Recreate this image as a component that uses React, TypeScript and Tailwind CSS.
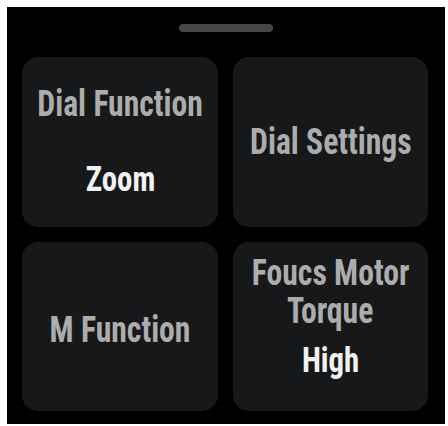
type Tile = {
  title: string[]
  value?: string
  className?: string
}

const TILES: Tile[] = [
  { title: ["Dial Function"], value: "Zoom" },
  { title: ["Dial Settings"] },
  { title: ["M Function"], className: "pt-[6px]" },
  { title: ["Foucs Motor", "Torque"], value: "High", className: "pb-[19px]" },
]

function SettingTile({ title, value, className }: Tile) {
  const single = title.length === 1
  return (
    <button
      type="button"
      className={`flex flex-col items-center justify-center rounded-[16px] bg-[#171819] ${className ?? ""}`}
    >
      {title.map((line) => (
        <span
          key={line}
          className="scale-x-[0.88] whitespace-nowrap text-[36px] leading-[38px] font-bold text-[#acacac] [font-stretch:75%]"
        >
          {line}
        </span>
      ))}
      {value ? (
        <span
          className={`scale-x-[0.88] whitespace-nowrap text-[35px] leading-[38px] font-bold text-[#f2f2f2] [font-stretch:75%] ${single ? "mt-[38px]" : "mt-[12px]"}`}
        >
          {value}
        </span>
      ) : null}
    </button>
  )
}

export default function App() {
  return (
    <div className="min-h-[426px] w-[448px] bg-white pt-[7px] pl-[7px] [font-family:Roboto,sans-serif]">
      <div className="flex h-[417px] w-[438px] flex-col items-center bg-black pt-[17px] pl-[15px] pr-[16px]">
        <div className="h-[8px] w-[94px] rounded-full bg-[#474747]" />
        <div className="mt-[25px] grid w-full grid-cols-[196px_195px] grid-rows-[170px_169px] gap-[15px]">
          {TILES.map((t) => (
            <SettingTile key={t.title.join(" ")} {...t} />
          ))}
        </div>
      </div>
    </div>
  )
}
